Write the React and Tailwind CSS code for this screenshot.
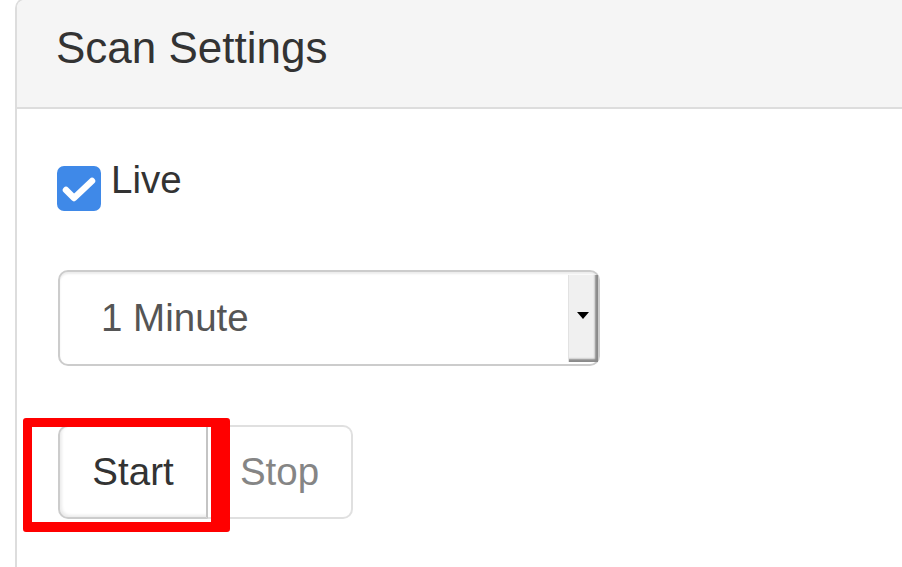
// App.jsx — Scan Settings panel (Bootstrap-style, zoomed)
export default function App() {
  return (
    <div
      className="relative w-full h-[567px] overflow-hidden bg-white text-[#333333]"
      style={{ fontFamily: '"Liberation Sans", Arial, sans-serif' }}
    >
      {/* Panel */}
      <div className="ml-[15px] -mt-[2px] border-2 border-r-0 border-b-0 border-[#dddddd] rounded-tl-[10px] h-[600px]">
        {/* Header */}
        <div className="h-[109px] bg-[#f5f5f5] border-b-2 border-[#dddddd] rounded-tl-[8px] pl-[39px] pt-[24px]">
          <h3 className="text-[44px] leading-[47px] font-normal">Scan Settings</h3>
        </div>

        {/* Body */}
        <div className="pl-[41px] pt-[43px] flex flex-col items-start">
          {/* Live checkbox */}
          <label className="flex items-start">
            <span className="-ml-[1px] mt-[14px] w-[44px] h-[45px] rounded-[7px] bg-[#3f89e8] flex items-center justify-center">
              <svg width="44" height="45" viewBox="0 0 44 45">
                <path
                  d="M9 24 L17 32 L35 15"
                  fill="none"
                  stroke="white"
                  strokeWidth="6.5"
                  strokeLinecap="round"
                  strokeLinejoin="round"
                />
              </svg>
            </span>
            <span className="ml-[10px] text-[38.5px] leading-[55px]">Live</span>
          </label>

          {/* Interval select */}
          <div className="mt-[59px] w-[542px] h-[96px] border-2 border-[#cccccc] rounded-[10px] shadow-[inset_0_2px_2px_rgba(0,0,0,0.08)] flex">
            <div className="flex-1 flex items-center pl-[41px] text-[38.5px] text-[#555555]">1 Minute</div>
            <div className="mt-[3px] mb-[2px] w-[30px] bg-[#f0f0f0] border-l border-[#e2e2e2] shadow-[inset_-3px_-3px_2px_#8a8a8a] flex items-center justify-center">
              <span className="-mt-[6px] -ml-[2px] w-0 h-0 border-l-[6px] border-r-[6px] border-t-[7px] border-l-transparent border-r-transparent border-t-black" />
            </div>
          </div>

          {/* Start / Stop */}
          <div className="mt-[59px] flex">
            <button className="w-[150px] h-[94px] border-2 border-[#cccccc] border-r-[#c4c4c4] rounded-l-[10px] bg-white text-[38.5px] text-[#333333] shadow-[inset_2px_-2px_3px_rgba(0,0,0,0.08)] flex items-center justify-center">
              Start
            </button>
            <button className="w-[145px] h-[94px] border-2 border-l-0 border-[#e0e0e0] rounded-r-[10px] bg-white text-[38.5px] text-[#858585] flex items-center justify-center">
              Stop
            </button>
          </div>
        </div>
      </div>

      {/* Highlight annotation */}
      <div className="absolute left-[23px] top-[418px] w-[207px] h-[114px] border-[9px] border-r-[19px] border-b-[10px] border-[#ff0000] rounded-[3px]" />
    </div>
  )
}
